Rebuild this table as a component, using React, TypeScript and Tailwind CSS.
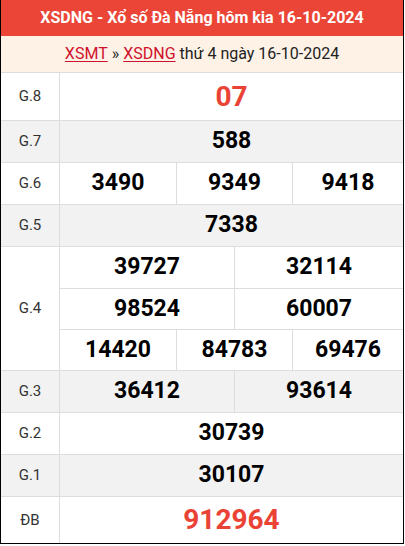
type Cell = { v: string; w?: string };

const rows: { label: string; bg: string; h: string; lines: Cell[][]; big?: boolean }[] = [
  { label: "G.8", bg: "bg-white", h: "h-[47px]", lines: [[{ v: "07" }]], big: true },
  { label: "G.7", bg: "bg-[#f2f2f2]", h: "h-[41px]", lines: [[{ v: "588" }]] },
  {
    label: "G.6",
    bg: "bg-white",
    h: "h-[41px]",
    lines: [[{ v: "3490", w: "w-[117px]" }, { v: "9349", w: "w-[116px]" }, { v: "9418" }]],
  },
  { label: "G.5", bg: "bg-[#f2f2f2]", h: "h-[41px]", lines: [[{ v: "7338" }]] },
  {
    label: "G.4",
    bg: "bg-white",
    h: "h-[41px]",
    lines: [
      [{ v: "39727", w: "w-[175px]" }, { v: "32114" }],
      [{ v: "98524", w: "w-[175px]" }, { v: "60007" }],
      [{ v: "14420", w: "w-[117px]" }, { v: "84783", w: "w-[116px]" }, { v: "69476" }],
    ],
  },
  {
    label: "G.3",
    bg: "bg-[#f2f2f2]",
    h: "h-[41px]",
    lines: [[{ v: "36412", w: "w-[175px]" }, { v: "93614" }]],
  },
  { label: "G.2", bg: "bg-white", h: "h-[41px]", lines: [[{ v: "30739" }]] },
  { label: "G.1", bg: "bg-[#f2f2f2]", h: "h-[41px]", lines: [[{ v: "30107" }]] },
  { label: "ĐB", bg: "bg-white", h: "h-[46px]", lines: [[{ v: "912964" }]], big: true },
];

export default function App() {
  return (
    <div
      className="w-[404px] bg-white border-x border-b border-black"
      style={{ fontFamily: "Roboto, 'Liberation Sans', sans-serif" }}
    >
      <div className="h-[36px] bg-[#eb4537] flex items-center justify-center text-white font-bold text-[16px]">
        XSDNG - Xổ số Đà Nẵng hôm kia 16-10-2024
      </div>
      <div className="h-[36px] bg-[#fef2e7] flex items-center justify-center text-[16px] text-[#222]">
        <span className="text-[#d0112b] underline underline-offset-2">XSMT</span>
        <span className="mx-1">»</span>
        <span className="text-[#d0112b] underline underline-offset-2">XSDNG</span>
        <span className="ml-1">thứ 4 ngày 16-10-2024</span>
      </div>

      {rows.map((r) => (
        <div key={r.label} className={`flex border-t border-[#dddddd] ${r.bg}`}>
          <div className="w-[59px] shrink-0 border-r border-[#dddddd] flex items-center justify-center text-[15px] text-[#333]">
            {r.label}
          </div>
          <div className="flex-1 flex flex-col">
            {r.lines.map((line, li) => (
              <div
                key={li}
                className={`flex ${r.h} ${li > 0 ? "border-t border-[#dddddd]" : ""}`}
              >
                {line.map((c, ci) => (
                  <div
                    key={ci}
                    className={`${c.w ?? "flex-1"} shrink-0 flex items-center justify-center font-bold ${
                      ci < line.length - 1 ? "border-r border-[#dddddd]" : ""
                    } ${r.big ? "text-[28px] text-[#ea4335]" : "text-[23px] text-black"}`}
                  >
                    {c.v}
                  </div>
                ))}
              </div>
            ))}
          </div>
        </div>
      ))}
    </div>
  );
}
